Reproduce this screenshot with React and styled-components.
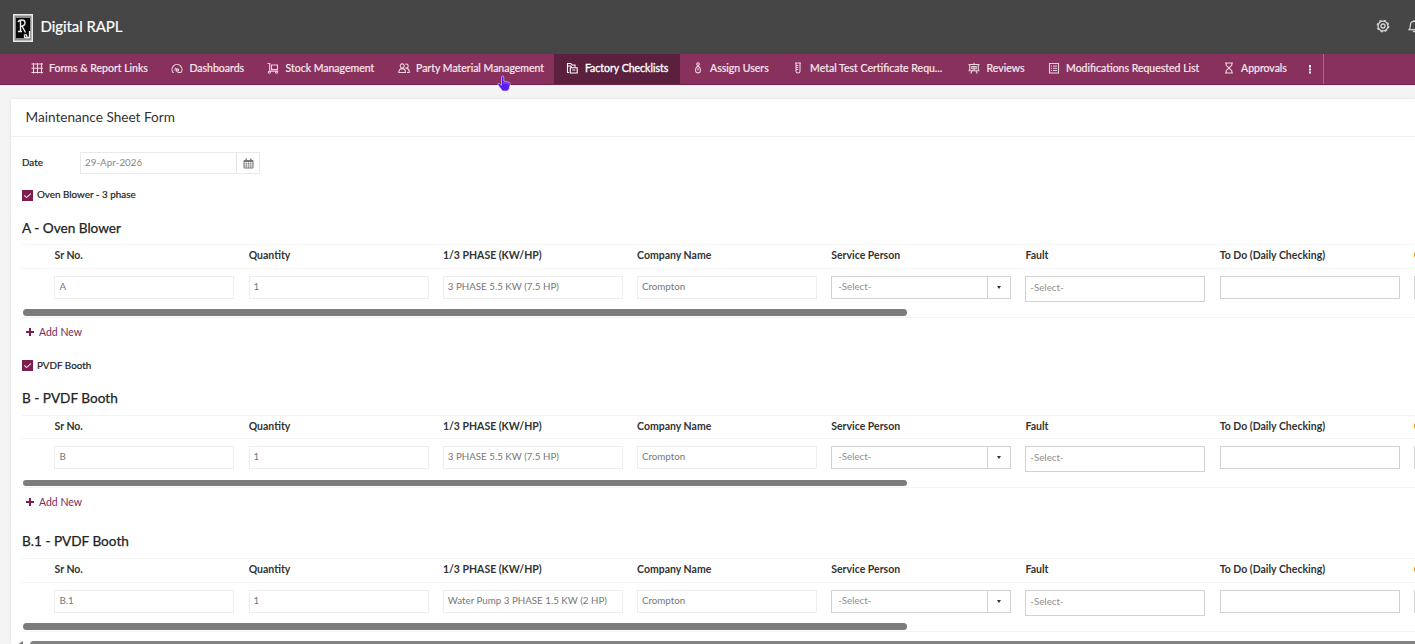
import React from "react";
import styled, { createGlobalStyle } from "styled-components";

const Global = createGlobalStyle`
  * { box-sizing: border-box; }
  html, body { margin: 0; height: 644px; overflow: hidden; background: #f4f4f4; }
  body { font-family: Lato, "Open Sans", sans-serif; color: #333; }
`;

const Page = styled.div`
  width: 1415px;
  height: 644px;
  overflow: hidden;
  display: flex;
  flex-direction: column;
`;

const Header = styled.header`
  flex: 0 0 54px;
  background: #464646;
  display: flex;
  align-items: center;
  padding: 1px 0 0 12.5px;
  overflow: hidden;
`;
const Brand = styled.div`
  margin: -3px 0 0 8px;
  font-size: 15px;
  line-height: 20px;
  letter-spacing: -0.07px;
  color: #fff;
  -webkit-text-stroke: 0.2px #fff;
`;
const HeaderActions = styled.div`
  margin-left: auto;
  margin-top: -4px;
  display: flex;
  gap: 17.5px;
  align-items: center;
  margin-right: -4.5px;
  flex: none;
`;

const Nav = styled.nav`
  flex: 0 0 30.5px;
  display: flex;
  background: #87315c;
  border-bottom: 1px solid #761f4b;
  padding-left: 18.5px;
`;
const NavItem = styled.div`
  flex: 0 0 ${(p) => p.$w}px;
  display: flex;
  align-items: center;
  padding: 0 0 2px 12px;
  gap: 6.5px;
  overflow: hidden;
  white-space: nowrap;
  font-size: 10.5px;
  color: ${(p) => (p.$active ? "#fff" : "#f8e9f0")};
  background: ${(p) => (p.$active ? "#5a203d" : "transparent")};
  -webkit-text-stroke: ${(p) => (p.$active ? "0.35px #fff" : "0.2px #f8e9f0")};
`;
const NavIcon = styled.svg`
  flex: none;
  width: 12px;
  height: 12px;
  margin-top: 1px;
  fill: none;
  stroke: ${(p) => (p.$active ? "#fff" : "#edd3e0")};
  stroke-width: 1.1;
`;
const NavMore = styled.div`
  width: 26px;
  border-right: 1px solid #a9668a;
  display: flex;
  justify-content: center;
  align-items: center;
`;

const Card = styled.main`
  flex: 1;
  margin: 14.5px 0 0 11px;
  background: #fff;
  box-shadow: 0 0 3px rgba(0, 0, 0, 0.1);
  display: flex;
  flex-direction: column;
  min-height: 0;
`;
const Title = styled.h1`
  margin: 0;
  flex: 0 0 38px;
  padding-left: 14.5px;
  border-bottom: 1px solid #f1f1f1;
  font-size: 13.6px;
  font-weight: 400;
  line-height: 37px;
`;
const Body = styled.div`
  padding-left: 11px;
  display: flex;
  flex-direction: column;
`;
const DateRow = styled.div`
  display: flex;
  align-items: center;
  height: 22px;
  margin-top: 15px;
`;
const Label = styled.span`
  margin-top: -2px;
  font-size: 9.85px;
  color: #222;
  -webkit-text-stroke: 0.2px #222;
`;
const DateLabel = styled(Label)`
  width: 58px;
  margin-top: -3px;
`;
const DateBox = styled.div`
  display: flex;
  width: 180px;
  height: 22px;
  border: 1px solid #e9e9e9;
  font-size: 9.9px;
  line-height: 19px;
  color: #888;
`;
const DateText = styled.div`
  flex: 1;
  padding-left: 4px;
`;
const DateButton = styled.div`
  width: 23px;
  border-left: 1px solid #e4e4e4;
  display: flex;
  align-items: center;
  justify-content: center;
`;
const CheckRow = styled.div`
  display: flex;
  align-items: center;
  gap: 4px;
  height: 12px;
  margin-top: ${(p) => p.$top}px;
`;
const CheckBox = styled.span`
  width: 11px;
  height: 11px;
  background: #7c1f4e;
  display: flex;
  align-items: center;
  justify-content: center;
`;
const Heading = styled.h2`
  margin: ${(p) => p.$top}px 0 0;
  height: 18px;
  line-height: 18px;
  font-size: 13.62px;
  font-weight: 400;
  color: #222;
  -webkit-text-stroke: 0.25px #222;
`;
const TableBox = styled.div`
  margin-top: ${(p) => p.$gap}px;
  height: 73.5px;
  border-top: 1px solid #f3f3f3;
  border-bottom: 1px solid #f3f3f3;
  overflow: hidden;
  display: flex;
  flex-direction: column;
`;
const HeadRow = styled.div`
  display: flex;
  flex: 0 0 23.5px;
  padding-left: 32.5px;
  border-bottom: 1px solid #f3f3f3;
`;
const HeadCell = styled.div`
  flex: 0 0 194.2px;
  font-size: 10.5px;
  font-weight: 700;
  line-height: 20.5px;
  color: #333;
  white-space: nowrap;
`;
const RequiredCell = styled(HeadCell)`
  color: #d98324;
`;
const FieldRow = styled.div`
  display: flex;
  flex: none;
  height: 41px;
  padding: 7px 0 0 32.4px;
`;
const Cell = styled.div`
  flex: 0 0 194.2px;
`;
const Field = styled.div`
  width: 180px;
  height: ${(p) => (p.$tall ? 26 : 23)}px;
  border: 1px solid ${(p) => (p.$editable ? "#d2d2d2" : "#eeeeee")};
  padding-left: ${(p) => p.$pad || 4}px;
  font-size: 9.75px;
  line-height: ${(p) => (p.$tall ? 21.5 : 19.5)}px;
  color: ${(p) => (p.$editable ? "#8f8f8f" : "#777")};
  white-space: nowrap;
  display: flex;
  justify-content: space-between;
`;
const Caret = styled.div`
  width: 23px;
  border-left: 1px solid #d2d2d2;
  display: flex;
  align-items: center;
  justify-content: center;
  &::after {
    content: "";
    border: 2.5px solid transparent;
    border-top: 3px solid #333;
    border-bottom: 0;
  }
`;
const ScrollThumb = styled.div`
  position: relative;
  z-index: 1;
  width: 884.5px;
  height: 6.5px;
  margin: -8.5px 0 0 0.5px;
  border-radius: 3.5px;
  background: #7c7c7c;
`;
const AddNew = styled.div`
  display: flex;
  align-items: center;
  gap: 5px;
  height: 14px;
  margin-top: 9px;
  padding-left: 4px;
  color: #7c2a55;
  font-size: 10.5px;
`;
const PageScroll = styled.div`
  display: flex;
  gap: 7px;
  height: 7px;
  margin: 11px 0 0 -5px;
`;
const PageThumb = styled.div`
  flex: 1;
  border-radius: 4px 0 0 4px;
  background: #828282;
`;
const Hand = styled.svg`
  position: absolute;
  left: 497px;
  top: 74.5px;
  width: 15px;
  height: 18px;
`;

const icons = {
  grid: <path d="M2.500 1v10.500M6.500 1v10.500M10.500 1v10.500M.5 2h11.500M.5 6.300h11.500M.5 10.500h11.500" />,
  gauge: <path d="M2.800 10.500H2A5 5 0 1 1 10 10.500H6.500M6.300 8.300 4 5.800M6.300 9.300a1.300 1.300 0 1 0 0-2.600 1.300 1.300 0 0 0 0 2.600M3 8h.8" />,
  cart: <path d="M.5 1.500h2.200v7.700h8.600M4.500 3h6v4.600h-6zM2.300 9.200a1 1 0 1 0 .1 0M9.500 9.200a1 1 0 1 0 .1 0" />,
  people: <path d="M4.200 1.900a2 2.100 0 1 0 .1 0M.8 10.500c0-2.500 1.400-3.900 3.400-3.900s3.300 1.400 3.300 3.900zM7.300 2.200a2 2.100 0 1 1 .3 3.900c2.400 0 3.700 1.600 3.700 4.400H9" />,
  files: <path d="M3 10.500H1.500v-9h3.300l1.200 1.500h3v2M4.300 5.700h6.900v5.300H4.300zM1.500 4h3.300l1 1.700M6.300 8h3" />,
  person: <path d="M6 .8a1.300 1.300 0 1 0 .1 0M6 4.200C4 5 3.300 7 3.700 9.400c.3 1.900 4.300 1.900 4.600 0C8.700 7 8 5 6 4.200zM6 6v2.500" />,
  tube: <path d="M3 1h6M4 1v8.200c0 2.400 4 2.400 4 0V1M4 3.500h2.300M4 5.500h2.300M4 7.500h2.300" />,
  board: <path d="M.5 2.500h11M1.700 2.500v6.200h8.600V2.500M6 .8v1.700M4 8.700 2.800 11.500M8 8.700l1.200 2.800M.5 8.700h11M3.800 4.500h4.400v2.300H3.800zM6 4.500v4" />,
  list: <path d="M1.500 1.500h9v9.500h-9zM3 4h1M5 4h4M3 6.200h1M5 6.200h4M3 8.500h1M5 8.500h4" />,
  glass: <path d="M2 1h8M2 11h8M3.200 1v2.300L6 6l2.800-2.700V1M3.200 11V8.700L6 6l2.800 2.700V11" />,
};

const navItems = [
  { icon: "grid", text: "Forms & Report Links", w: 140.5 },
  { icon: "gauge", text: "Dashboards", w: 96 },
  { icon: "cart", text: "Stock Management", w: 130.5 },
  { icon: "people", text: "Party Material Management", w: 168.9 },
  { icon: "files", text: "Factory Checklists", w: 125.2, active: true },
  { icon: "person", text: "Assign Users", w: 100 },
  { icon: "tube", text: "Metal Test Certificate Requ...", w: 176.5 },
  { icon: "board", text: "Reviews", w: 79.5 },
  { icon: "list", text: "Modifications Requested List", w: 175 },
  { icon: "glass", text: "Approvals", w: 87 },
];

const columns = [
  "Sr No.",
  "Quantity",
  "1/3 PHASE (KW/HP)",
  "Company Name",
  "Service Person",
  "Fault",
  "To Do (Daily Checking)",
];

function Check({ text, top }) {
  return (
    <CheckRow $top={top}>
      <CheckBox>
        <svg width="9" height="9" viewBox="0 0 9 9" fill="none" stroke="#f3dfe9" strokeWidth="1.1">
          <path d="M1.300 4.300 3.600 6.600 7.800 2.600" />
        </svg>
      </CheckBox>
      <Label>{text}</Label>
    </CheckRow>
  );
}

function Subform({ title, top, gap = 7, values }) {
  return (
    <>
      <Heading $top={top}>{title}</Heading>
      <TableBox $gap={gap}>
        <HeadRow>
          {columns.map((c) => (
            <HeadCell key={c}>{c}</HeadCell>
          ))}
          <RequiredCell>C</RequiredCell>
        </HeadRow>
        <FieldRow>
          {values.map((v, i) => (
            <Cell key={i}>
              <Field>{v}</Field>
            </Cell>
          ))}
          <Cell>
            <Field $editable $pad={6}>
              -Select-
              <Caret />
            </Field>
          </Cell>
          <Cell>
            <Field $editable $tall>
              -Select-
            </Field>
          </Cell>
          <Cell>
            <Field $editable />
          </Cell>
          <Cell>
            <Field $editable />
          </Cell>
        </FieldRow>
      </TableBox>
      <ScrollThumb />
    </>
  );
}

function AddButton() {
  return (
    <AddNew>
      <svg width="8" height="8" viewBox="0 0 8 8" stroke="#7c1f4e" strokeWidth="2">
        <path d="M4 0v8M0 4h8" />
      </svg>
      Add New
    </AddNew>
  );
}

export default function App() {
  return (
    <Page>
      <Global />
      <Header>
        <svg width="20" height="28" viewBox="0 0 20 28" fill="none">
          <path d="M0 0h20v28H0z" fill="#e9e9e9" />
          <path d="M1.500 1.500h17v25h-17z" fill="#8b8b8b" />
          <path d="M3 4h14v20H3z" fill="#080808" />
          <path d="M7.500 6.500v11M5 8c1-2.500 7-3 7 .7 0 2.800-3 3.500-5 3.500M9 12l3.500 6.500M5 17.500h4" stroke="#eee" strokeWidth="1.400" />
          <path d="M11.500 24v-3M11 21c3-1.500 3 1 3 3M16.500 17v7M12 23.500h5" stroke="#eee" strokeWidth="1.300" />
        </svg>
        <Brand>Digital RAPL</Brand>
        <HeaderActions>
          <svg width="14" height="14" viewBox="0 0 14 14" fill="none" stroke="#d2d2d2">
            <circle cx="7" cy="7" r="4.900" strokeWidth="1.300" />
            <circle cx="7" cy="7" r="5.800" strokeWidth="1.200" strokeDasharray="2.300 2.255" />
            <circle cx="7" cy="7" r="2" strokeWidth="1.300" />
          </svg>
          <svg width="12" height="14" viewBox="0 0 12 14" fill="none" stroke="#d2d2d2" strokeWidth="1.300">
            <path d="M1 10.700c1.300-1 1.400-2.200 1.400-4.500C2.400 3.700 4 2.300 6 2.300s3.600 1.400 3.600 3.900c0 2.300.1 3.500 1.400 4.500zM6 2.300V1M4.800 12.500h2.400" />
          </svg>
        </HeaderActions>
      </Header>
      <Nav>
        {navItems.map((n) => (
          <NavItem key={n.text} $w={n.w} $active={n.active}>
            <NavIcon viewBox="0 0 12 12" $active={n.active}>
              {icons[n.icon]}
            </NavIcon>
            {n.text}
          </NavItem>
        ))}
        <NavMore>
          <svg width="4" height="12" viewBox="0 0 4 12" fill="#fff">
            <path d="M1 2h2v2.500H1zM1 5.500h2v2H1zM1 8.500h2v2H1z" />
          </svg>
        </NavMore>
      </Nav>
      <Card>
        <Title>Maintenance Sheet Form</Title>
        <Body>
          <DateRow>
            <DateLabel>Date</DateLabel>
            <DateBox>
              <DateText>29-Apr-2026</DateText>
              <DateButton>
                <svg width="11" height="11" viewBox="0 0 11 11" fill="none" stroke="#777">
                  <path d="M1 2.500h9v7.500H1z" />
                  <path d="M1 3h9" strokeWidth="2" />
                  <path d="M3.200.5v2.500M7.800.5v2.500" strokeWidth="1.400" />
                  <path d="M1 5.800h9M1 8h9M3.300 4v6M5.500 4v6M7.700 4v6" strokeWidth=".6" />
                </svg>
              </DateButton>
            </DateBox>
          </DateRow>
          <Check text="Oven Blower - 3 phase" top={15} />
          <Subform title="A - Oven Blower" top={18} values={["A", "1", "3 PHASE 5.5 KW (7.5 HP)", "Crompton"]} />
          <AddButton />
          <Check text="PVDF Booth" top={21} />
          <Subform title="B - PVDF Booth" top={17} gap={8} values={["B", "1", "3 PHASE 5.5 KW (7.5 HP)", "Crompton"]} />
          <AddButton />
          <Subform title="B.1 - PVDF Booth" top={23} gap={8} values={["B.1", "1", "Water Pump 3 PHASE 1.5 KW (2 HP)", "Crompton"]} />
          <PageScroll>
            <svg width="6" height="8" viewBox="0 0 6 8" fill="#777">
              <path d="M6 0v8L0 4z" />
            </svg>
            <PageThumb />
          </PageScroll>
        </Body>
      </Card>
      <Hand viewBox="0 0 15 18">
        <path
          d="M4.500 2c0-1.500 2.300-1.500 2.300 0v4l5 1.300c1.300.4 1.600 1.200 1.300 2.500l-.9 3.700c-.4 1.600-1.400 2.500-3 2.500H7c-1.200 0-1.900-.5-2.600-1.500L1 10c-.7-1.300.7-2.200 1.800-1.200l1.700 1.500z"
          fill="#5b1df0"
          stroke="#fff"
          strokeWidth=".5"
        />
        <path d="M7 6.500V9M9 7v2M11 7.500v2" stroke="#b79cff" strokeWidth=".5" />
      </Hand>
    </Page>
  );
}
